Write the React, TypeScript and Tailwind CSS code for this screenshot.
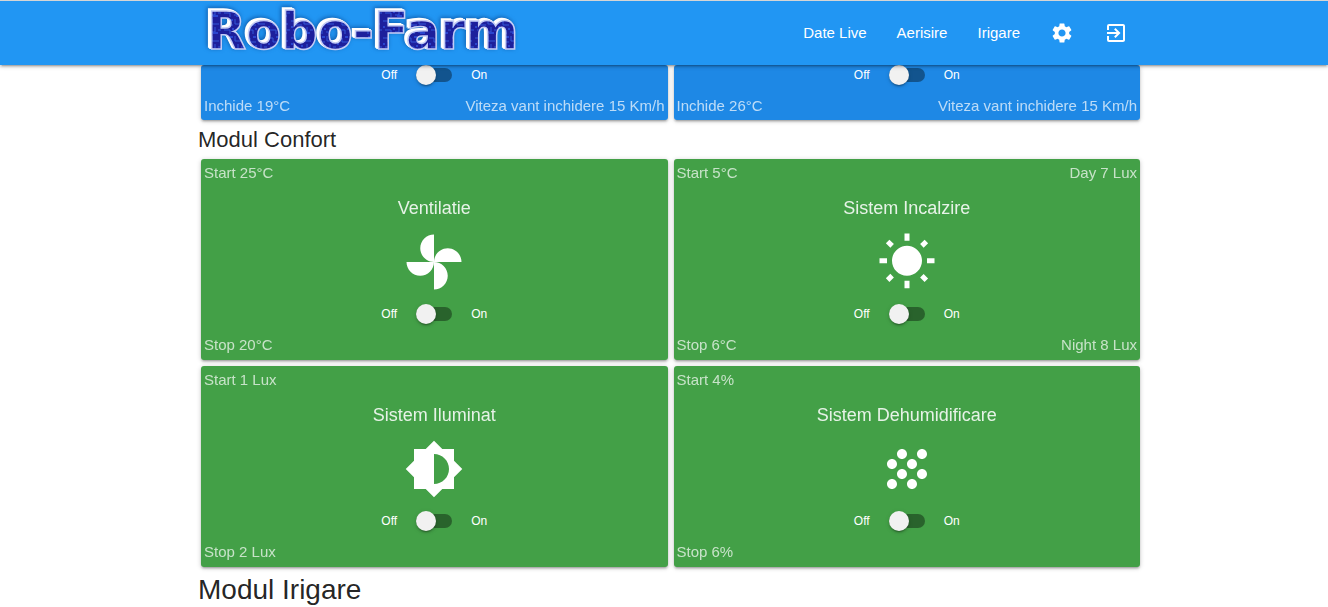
import type { ReactNode } from "react";
import { MdBrightness6, MdExitToApp, MdGrain, MdSettings, MdWbSunny } from "react-icons/md";

function Logo() {
  return (
    <a href="#home" aria-label="Robo-Farm" className="block">
      <svg width="330" height="64" viewBox="0 0 330 64">
        <defs>
          <pattern id="circuit" width="23" height="17" patternUnits="userSpaceOnUse">
            <rect width="23" height="17" fill="#1d1f9c" />
            <path d="M1 3h5v4h6M14 1v5h7M3 12h6v4M17 9v5h-4M20 12h3" stroke="#3257d8" strokeWidth="1" fill="none" />
            <path d="M9 2h3M2 8v2M15 15h5M11 11h2" stroke="#2a45cf" strokeWidth="2" fill="none" />
          </pattern>
        </defs>
        <text
          x="9"
          y="48"
          fill="url(#circuit)"
          stroke="#c3ccf6"
          strokeWidth="1.5"
          className="font-['DejaVu_Sans',sans-serif] text-[51px] leading-none font-bold [filter:drop-shadow(-1px_-1px_0_white)_drop-shadow(-2px_-1px_0_white)_drop-shadow(-1px_-1px_2px_rgba(0,50,120,0.55))]"
        >
          Robo-Farm
        </text>
      </svg>
    </a>
  );
}

function FanIcon() {
  return (
    <svg viewBox="0 0 24 24" fill="currentColor" className="size-[60px]" aria-hidden="true">
      <path d="M12 12c0-3 2.5-5.5 5.5-5.5S23 9 23 12H12zm0 0c0 3-2.5 5.5-5.5 5.5S1 15 1 12h11zm0 0c-3 0-5.5-2.5-5.5-5.5S9 1 12 1v11zm0 0c3 0 5.5 2.5 5.5 5.5S15 23 12 23V12z" />
    </svg>
  );
}

function Toggle() {
  return (
    <label className="flex h-5 cursor-pointer items-center justify-center text-[12px] leading-5 text-white">
      Off
      <span className="relative mx-[19px] flex h-5 w-9 items-center">
        <input type="checkbox" className="peer sr-only" />
        <span className="h-3.5 w-full rounded-full bg-black/38" />
        <span className="absolute top-0 left-0 size-5 rounded-full bg-[#f1f1f1] shadow-[0_3px_1px_-2px_rgba(0,0,0,0.2),0_2px_2px_0_rgba(0,0,0,0.14),0_1px_5px_0_rgba(0,0,0,0.12)] transition-transform peer-checked:translate-x-4" />
      </span>
      On
    </label>
  );
}

function Limits({ left, right }: { left: string; right?: string }) {
  return (
    <div className="flex justify-between text-[15px] leading-[22px] opacity-70">
      <span>{left}</span>
      {right && <span>{right}</span>}
    </div>
  );
}

const cardShadow =
  "rounded-[3px] text-white shadow-[0_2px_2px_0_rgba(0,0,0,0.14),0_3px_1px_-2px_rgba(0,0,0,0.12),0_1px_5px_0_rgba(0,0,0,0.2)]";

function WindowCard({ close }: { close: string }) {
  return (
    <section className={`flex flex-col gap-2.5 bg-[#1e88e5] px-[3px] pb-[3px] ${cardShadow}`}>
      <Toggle />
      <Limits left={close} right="Viteza vant inchidere 15 Km/h" />
    </section>
  );
}

type ComfortProps = {
  title: string;
  icon: ReactNode;
  start: string;
  stop: string;
  day?: string;
  night?: string;
};

function ComfortCard({ title, icon, start, stop, day, night }: ComfortProps) {
  return (
    <section className={`flex flex-col bg-[#43a047] px-[3px] pt-[3px] pb-1 ${cardShadow}`}>
      <Limits left={start} right={day} />
      <h3 className="mt-2.5 text-center text-[18px] leading-7 opacity-87">{title}</h3>
      <div className="mt-2.5 mb-3 flex justify-center">{icon}</div>
      <Toggle />
      <div className="mt-2.5">
        <Limits left={stop} right={night} />
      </div>
    </section>
  );
}

export default function App() {
  return (
    <div className="bg-white font-['Liberation_Sans',Arial,sans-serif] text-black/87">
      <header className="relative z-10 border-t border-[#d5d5d5] bg-[#2196f3] pl-[13px] text-white shadow-[0_2px_2px_0_rgba(0,0,0,0.14),0_3px_1px_-2px_rgba(0,0,0,0.12),0_1px_5px_0_rgba(0,0,0,0.2)]">
        <div className="mx-auto flex h-16 max-w-[945px] items-center justify-between">
          <Logo />
          <nav className="flex items-center text-[15px]">
            <a href="#date-live" className="px-[15px]">Date Live</a>
            <a href="#aerisire" className="px-[15px]">Aerisire</a>
            <a href="#irigare" className="px-[15px]">Irigare</a>
            <a href="#settings" aria-label="Settings" className="px-[15px]">
              <MdSettings className="size-6" />
            </a>
            <a href="#logout" aria-label="Logout" className="px-[15px]">
              <MdExitToApp className="size-6" />
            </a>
          </nav>
        </div>
      </header>
      <main className="pl-[13px]">
        <div className="mx-auto max-w-[945px]">
          <div className="grid grid-cols-2 gap-1.5 px-[3px]">
            <WindowCard close="Inchide 19°C" />
            <WindowCard close="Inchide 26°C" />
          </div>
          <h2 className="text-[22px] leading-[39px]">Modul Confort</h2>
          <div className="grid grid-cols-2 gap-1.5 px-[3px]">
            <ComfortCard title="Ventilatie" icon={<FanIcon />} start="Start 25°C" stop="Stop 20°C" />
            <ComfortCard
              title="Sistem Incalzire"
              icon={<MdWbSunny className="size-[60px]" />}
              start="Start 5°C"
              stop="Stop 6°C"
              day="Day 7 Lux"
              night="Night 8 Lux"
            />
            <ComfortCard
              title="Sistem Iluminat"
              icon={<MdBrightness6 className="size-[60px]" />}
              start="Start 1 Lux"
              stop="Stop 2 Lux"
            />
            <ComfortCard
              title="Sistem Dehumidificare"
              icon={<MdGrain className="size-[60px]" />}
              start="Start 4%"
              stop="Stop 6%"
            />
          </div>
          <h2 className="pt-1 text-[28px] leading-[38px]">Modul Irigare</h2>
        </div>
      </main>
    </div>
  );
}
